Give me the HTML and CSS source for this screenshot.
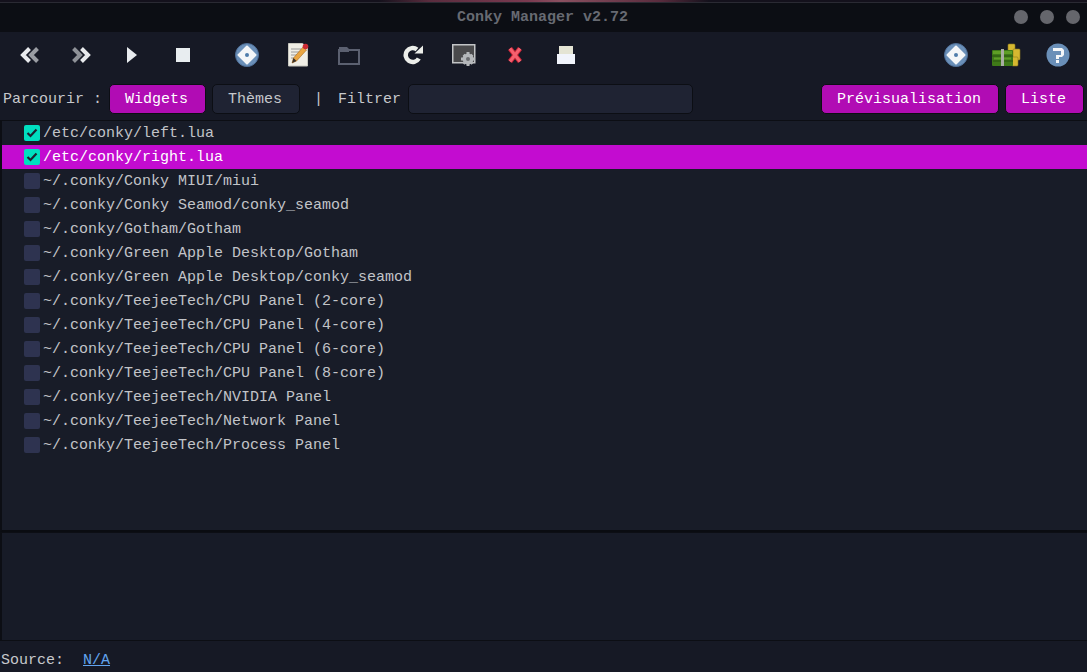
FILE: index.html
```html
<!DOCTYPE html>
<html lang="fr">
<head>
<meta charset="utf-8">
<title>Conky Manager v2.72</title>
<link rel="stylesheet" href="styles.css">
</head>
<body>
<svg class="defs" width="0" height="0" aria-hidden="true">
  <symbol id="disc" viewBox="0 0 24 24">
    <circle cx="12" cy="12" r="11.5" fill="#6a8fb8"/>
    <circle cx="12" cy="12" r="11.5" fill="none" stroke="#4f6f98" stroke-width="1"/>
    <path d="M12 3.500 20.500 12 12 20.500 3.500 12Z" fill="#f4f6f8" stroke="#f4f6f8" stroke-width="2" stroke-linejoin="round"/>
  </symbol>
</svg>
<div class="wallpaper"><span class="wall-art"></span></div>
<header class="titlebar">
  <div class="title">Conky Manager v2.72</div>
  <div class="wm"><i></i><i></i><i></i></div>
</header>
<div class="toolbar">
  <div class="tgroup">
    <span class="tool"><svg width="20" height="16" viewBox="0 0 20 16"><path d="M17.500 1.500 11 8l6.500 6.500" fill="none" stroke="#9a9da3" stroke-width="4"/><path d="M9.500 1.500 3 8l6.500 6.500" fill="none" stroke="#e8eaed" stroke-width="4"/></svg></span>
    <span class="tool"><svg width="20" height="16" viewBox="0 0 20 16"><path d="M2.500 1.500 9 8l-6.500 6.500" fill="none" stroke="#8e9197" stroke-width="4"/><path d="M10.500 1.500 17 8l-6.500 6.500" fill="none" stroke="#e8eaed" stroke-width="4"/></svg></span>
    <span class="tool"><svg width="12" height="18" viewBox="0 0 12 18"><path d="M1 1v16l10-8Z" fill="#e8ecef"/></svg></span>
    <span class="tool"><svg width="14" height="14" viewBox="0 0 14 14"><rect width="14" height="14" fill="#e8edf0"/></svg></span>
  </div>
  <div class="tgroup">
    <span class="tool"><svg width="24" height="24"><use href="#disc"/><circle cx="12" cy="12" r="2" fill="#4f7cab"/></svg></span>
    <span class="tool"><svg width="22" height="24" viewBox="0 0 22 24"><path d="M1.500.5h14l5 4v18.500h-19Z" fill="#f0eee6" stroke="#c8c8c0"/><path d="M4 6h10M4 9h9M4 12h6M4 15h4" stroke="#9a9a9a"/><path d="M5 20 6.500 15 16 4l3.500 3L9.500 18Z" fill="#eaa642" stroke="#a86a1c" stroke-width=".6"/><path d="M5 20l1.500-5 3 3Z" fill="#3a3028"/><circle cx="18.500" cy="3.500" r="2.800" fill="#cc2a34"/></svg></span>
    <span class="tool"><svg width="22" height="19" viewBox="0 0 22 19"><path d="M1 1h8l2 2v3H1Z" fill="#5b6070"/><rect x="1" y="4" width="20" height="14" fill="none" stroke="#5b6070" stroke-width="2"/></svg></span>
  </div>
  <div class="tgroup">
    <span class="tool"><svg width="20" height="20" viewBox="0 0 20 20"><path d="M15.800 13.500A7 7 0 1 1 14 4.500" fill="none" stroke="#eceeea" stroke-width="4.500"/><path d="M11.500 8.500H20V.5Z" fill="#eceeea"/></svg></span>
    <span class="tool"><svg width="24" height="22" viewBox="0 0 24 22"><rect x=".75" y=".75" width="22" height="18" fill="#4a4a4c" stroke="#c2c4c6" stroke-width="1.500"/><g fill="#b4b7ba"><circle cx="16" cy="15" r="5.500"/><path d="M14.500 8h3v14h-3ZM9 13.500h14v3H9ZM10.600 11.700l2-2 9 9-2 2ZM19.400 9.700l2 2-9 9-2-2Z"/></g><circle cx="16" cy="15" r="2" fill="#6a6c6f"/></svg></span>
    <span class="tool"><svg width="16" height="18" viewBox="0 0 16 18"><path d="M3 2.500 13 15.500M13 2.500 3 15.500" fill="none" stroke="#c92437" stroke-width="5"/><path d="M3 2.500 13 15.500M13 2.500 3 15.500" fill="none" stroke="#f4606e" stroke-width="3"/></svg></span>
    <span class="tool"><svg width="18" height="18" viewBox="0 0 18 18"><rect x="2" width="14" height="9" fill="#e4e4d4"/><rect y="8" width="18" height="10" fill="#f1f4fc"/></svg></span>
  </div>
  <div class="tgroup push">
    <span class="tool"><svg width="24" height="24"><use href="#disc"/><circle cx="12" cy="12" r="2" fill="#4f7cab"/></svg></span>
    <span class="tool"><svg width="29" height="24" viewBox="0 0 29 24"><g fill="#d6b830" stroke="#8f7a1e" stroke-width=".6"><rect x="16" y="1" width="7" height="7" rx="1"/><rect x="21" y="6" width="7" height="11" rx="1"/><rect x="20" y="14" width="6" height="9" rx="1"/></g><rect x="0" y="7" width="21" height="16" rx="1" fill="#3f7a18"/><path d="M1 9.500h19" stroke="#5f9e26" stroke-width="3"/><path d="M0 13h21M1 18h20" stroke="#2a5210"/><path d="M2 15.500h17" stroke="#5f9e26" stroke-width="2"/><rect x="9" y="6" width="3" height="17" fill="#a9ada3"/></svg></span>
    <span class="tool"><svg width="24" height="24" viewBox="0 0 24 24"><circle cx="12" cy="12" r="11.500" fill="#6a8fb8"/><path d="M7 5h9l2 2v5l-2 2h-3v2H10v-4h5V8H7Z" fill="#f4f6f8"/><rect x="10" y="17" width="3" height="3" fill="#f4f6f8"/></svg></span>
  </div>
</div>
<nav class="filterbar">
  <span class="lbl">Parcourir :</span>
  <button class="btn on w-widgets">Widgets</button>
  <button class="btn w-themes">Thèmes</button>
  <span class="lbl pipe">|</span>
  <label class="lbl filter-lbl">Filtrer</label>
  <input class="filter" type="text" aria-label="Filtrer">
  <button class="btn on w-preview">Prévisualisation</button>
  <button class="btn on w-list">Liste</button>
</nav>
<main class="list">
  <div class="row"><span class="check on"><svg width="12" height="10" viewBox="0 0 12 10"><path d="M1.500 5 4.500 8 10.500 1.500" fill="none" stroke="#1c2230" stroke-width="2.200"/></svg></span>/etc/conky/left.lua</div>
  <div class="row sel"><span class="check on"><svg width="12" height="10" viewBox="0 0 12 10"><path d="M1.500 5 4.500 8 10.500 1.500" fill="none" stroke="#1c2230" stroke-width="2.200"/></svg></span>/etc/conky/right.lua</div>
  <div class="row"><span class="check"></span>~/.conky/Conky MIUI/miui</div>
  <div class="row"><span class="check"></span>~/.conky/Conky Seamod/conky_seamod</div>
  <div class="row"><span class="check"></span>~/.conky/Gotham/Gotham</div>
  <div class="row"><span class="check"></span>~/.conky/Green Apple Desktop/Gotham</div>
  <div class="row"><span class="check"></span>~/.conky/Green Apple Desktop/conky_seamod</div>
  <div class="row"><span class="check"></span>~/.conky/TeejeeTech/CPU Panel (2-core)</div>
  <div class="row"><span class="check"></span>~/.conky/TeejeeTech/CPU Panel (4-core)</div>
  <div class="row"><span class="check"></span>~/.conky/TeejeeTech/CPU Panel (6-core)</div>
  <div class="row"><span class="check"></span>~/.conky/TeejeeTech/CPU Panel (8-core)</div>
  <div class="row"><span class="check"></span>~/.conky/TeejeeTech/NVIDIA Panel</div>
  <div class="row"><span class="check"></span>~/.conky/TeejeeTech/Network Panel</div>
  <div class="row"><span class="check"></span>~/.conky/TeejeeTech/Process Panel</div>
</main>
<section class="detail"></section>
<footer class="status"><span class="src">Source:</span><a class="link" href="#">N/A</a></footer>
</body>
</html>
```
FILE: styles.css
```css
* { box-sizing: border-box; }
html, body { margin: 0; height: 100%; }
body {
  width: 1087px; height: 672px; overflow: hidden;
  background: #161925; color: #c6c8cc;
  font: 15px/24px "Liberation Mono", "DejaVu Sans Mono", monospace;
  display: flex; flex-direction: column;
}
.defs { position: absolute; }
.wallpaper { flex: none; height: 3px; background: #14111c; display: flex; justify-content: center; border-bottom: 1px solid #2a2a33; }
.wall-art { width: 330px; height: 2px; background: linear-gradient(90deg, #14111c, #5a2c3e 15%, #7a3a50 45%, #8a5060 55%, #5a2c3e 85%, #14111c); }
.titlebar { flex: none; height: 29px; background: #0c0e14; display: flex; align-items: center; justify-content: center; position: relative; padding-right: 2px; }
.title { color: #676a72; font-weight: bold; font-size: 15px; }
.wm { position: absolute; right: 7px; top: 7px; display: flex; gap: 12px; }
.wm i { width: 14px; height: 14px; border-radius: 50%; background: #65666c; }
.toolbar { flex: none; height: 48px; display: flex; padding-left: 4px; padding-right: 4px; gap: 13px; }
.tgroup { display: flex; }
.push { margin-left: auto; }
.tool { width: 51px; height: 46px; display: flex; align-items: center; justify-content: center; }
.filterbar { flex: none; height: 41px; padding: 4px 3px 6px 3px; display: flex; align-items: center; border-bottom: 1px solid #0c0e14; }
.lbl { white-space: pre; padding-top: 2px; }
.btn {
  height: 30px; padding: 2px 2px 0 0; font: inherit; letter-spacing: 0;
  border: 1px solid #0c0e14; border-radius: 5px; background: #1f2333; color: #c6c8cc;
}
.btn.on { background: #b10cb4; color: #fff; }
.w-widgets { width: 97px; margin-left: 7px; }
.w-themes { width: 88px; margin-left: 6px; }
.pipe { margin-left: 14px; }
.filter-lbl { margin-left: 15px; }
.filter { width: 285px; height: 30px; margin-left: 7px; background: #1f2333; border: 1px solid #0c0e14; border-radius: 5px; }
.w-preview { width: 178px; margin-left: auto; }
.w-list { width: 79px; margin-left: 6px; }
.list { flex: none; height: 411px; background: #181c28; border-left: 2px solid #0c0e14; border-bottom: 2px solid #0a0c11; }
.row { height: 24px; display: flex; align-items: center; color: #c2c4c8; white-space: pre; padding: 2px 0 0 22px; }
.row.sel { background: #c30cd0; color: #fff; }
.check { width: 16px; height: 16px; margin: -2px 3px 0 0; border-radius: 2px; background: #2e3350; display: flex; align-items: center; justify-content: center; }
.check.on { background: #00dfc0; }
.detail { flex: none; height: 109px; background: #171b27; border-left: 2px solid #0c0e14; border-top: 1px solid #0c0e14; border-bottom: 1px solid #0c0e14; }
.status { flex: 1; min-height: 0; display: flex; align-items: center; padding: 9px 0 0 1px; background: #161925; line-height: 20px; }
.src { width: 82px; }
.link { color: #62a4ee; text-decoration: underline; }
```
